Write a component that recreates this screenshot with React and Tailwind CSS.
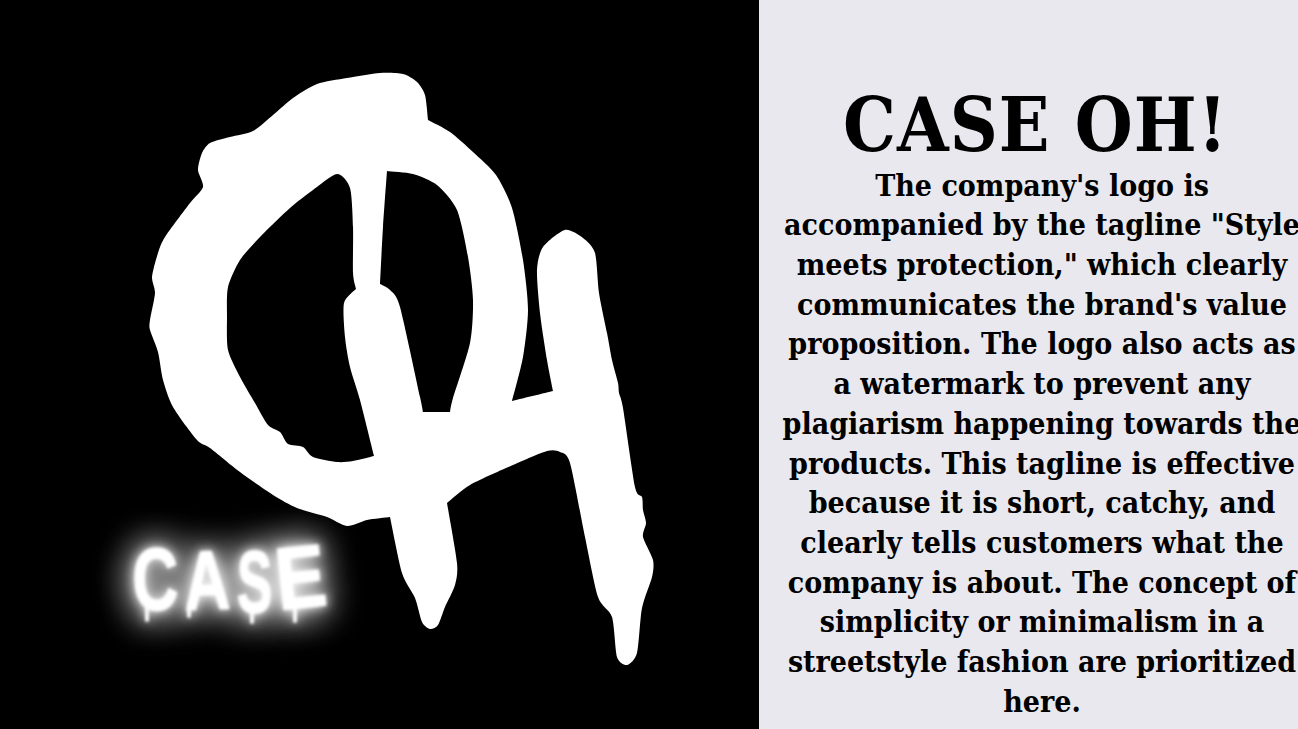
const paragraph = [
  "The company's logo is",
  'accompanied by the tagline "Style',
  'meets protection," which clearly',
  "communicates the brand's value",
  "proposition. The logo also acts as",
  "a watermark to prevent any",
  "plagiarism happening towards the",
  "products. This tagline is effective",
  "because it is short, catchy, and",
  "clearly tells customers what the",
  "company is about. The concept of",
  "simplicity or minimalism in a",
  "streetstyle fashion are prioritized",
  "here.",
];

// contorno do logo, pontos lidos do screenshot (ponto repetido = canto vivo)
const outer = [
  [198, 170], [202, 153], [210, 143], [230, 137], [253, 131], [273, 115], [293, 98], [317, 84], [347, 78],
  [380, 73], [403, 74], [417, 82], [425, 95], [428, 120], [428, 120], [450, 132], [473, 152], [496, 175], [512, 208],
  [523, 260], [528, 310], [523, 357], [512, 401], [512, 401], [553, 391], [553, 391], [547, 360], [540, 313], [537, 270], [543, 247],
  [565, 230], [583, 238], [595, 253], [599, 293], [607, 333], [612, 360], [618, 383], [619, 393], [623, 408],
  [635, 487], [642, 497], [643, 510], [646, 523], [643, 537], [653, 560], [652, 577], [642, 608], [637, 653],
  [627, 665], [617, 657], [612, 617], [598, 597], [585, 537], [570, 463], [560, 452], [547, 451], [513, 465],
  [470, 485], [447, 503], [447, 503], [457, 563], [455, 585], [445, 607], [438, 625], [430, 629], [422, 622], [415, 598],
  [402, 573], [390, 517], [390, 517], [367, 520], [347, 526], [327, 517], [297, 508], [273, 495], [240, 472], [210, 448],
  [197, 440], [173, 407], [163, 380], [158, 352], [150, 330], [150, 320], [155, 293], [152, 277], [158, 253],
  [165, 237], [190, 203], [203, 187],
];
const holeLeft = [
  [337, 174], [350, 188], [353, 227], [353, 273], [356, 289], [356, 289], [344, 303], [345, 337], [350, 367], [360, 400],
  [374, 456], [374, 456], [353, 461], [337, 462], [313, 457], [303, 447], [288, 444], [280, 432], [268, 425], [255, 403],
  [240, 377], [228, 350], [227, 317], [228, 287], [240, 260], [260, 237], [290, 208], [313, 190],
];
const holeRight = [
  [387, 171], [387, 171], [413, 174], [437, 185], [457, 210], [468, 257], [473, 300], [470, 343], [453, 398], [450, 412], [450, 412],
  [423, 412], [423, 412], [420, 397], [400, 307], [390, 290], [380, 284], [380, 284], [383, 227],
];

const caseLetters = [
  { ch: "C", t: "translate(133 610) rotate(-1) scale(.72 1)" },
  { ch: "A", t: "translate(185 610) rotate(-2) scale(.72 .95)" },
  { ch: "S", t: "translate(237 612) scale(.6 1)" },
  { ch: "E", t: "translate(279 610) rotate(-6) scale(.85 1)" },
];

function smooth(pts) {
  const n = pts.length;
  let d = `M${pts[0][0]} ${pts[0][1]}`;
  for (let i = 0; i < n; i++) {
    const a = pts[(i - 1 + n) % n], b = pts[i], c = pts[(i + 1) % n], e = pts[(i + 2) % n];
    if (b[0] === c[0] && b[1] === c[1]) continue;
    const c1 = [b[0] + (c[0] - a[0]) / 8, b[1] + (c[1] - a[1]) / 8];
    const c2 = [c[0] - (e[0] - b[0]) / 8, c[1] - (e[1] - b[1]) / 8];
    d += `C${c1[0]} ${c1[1]} ${c2[0]} ${c2[1]} ${c[0]} ${c[1]}`;
  }
  return d + "Z";
}

function Logo() {
  return (
    <svg viewBox="0 0 759 729" className="block h-full w-full">
      <defs>
        <filter id="glow" x="-40%" y="-60%" width="180%" height="220%">
          <feGaussianBlur in="SourceGraphic" stdDeviation="1.4" result="core" />
          <feGaussianBlur in="SourceGraphic" stdDeviation="6" result="g1" />
          <feGaussianBlur in="SourceGraphic" stdDeviation="18" result="g2" />
          <feMerge>
            <feMergeNode in="g2" />
            <feMergeNode in="g2" />
            <feMergeNode in="g1" />
            <feMergeNode in="core" />
          </feMerge>
        </filter>
      </defs>
      <path fill="#fff" fillRule="evenodd" d={smooth(outer) + smooth(holeLeft) + smooth(holeRight)} />
      <g filter="url(#glow)" fill="#fff" stroke="#fff" strokeLinecap="round">
        {caseLetters.map((l) => (
          <text key={l.ch} transform={l.t} fontFamily="Liberation Sans" fontWeight="700" fontSize="88" strokeWidth="1.5" strokeLinejoin="round">
            {l.ch}
          </text>
        ))}
        <path strokeWidth="4" fill="none" d="M147 606V620M189 604V616M252 608V622M295 602V621" />
      </g>
    </svg>
  );
}

export default function App() {
  return (
    <div className="flex h-[729px] w-[1298px] overflow-hidden">
      <div className="h-full w-[759px] shrink-0 bg-black">
        <Logo />
      </div>
      <div className="w-[566px] shrink-0 bg-[#e9e8ee] pt-[85px] text-center font-['DejaVu_Serif_Condensed','DejaVu_Serif',serif] font-bold text-black">
        <h1 className="pr-[13px] text-[74px] leading-[80px] tracking-[1px]">CASE OH!</h1>
        <p className="pt-[0.6px] text-[30px] leading-[39.7px]">
          {paragraph.map((line) => (
            <span key={line} className="block whitespace-nowrap">{line}</span>
          ))}
        </p>
      </div>
    </div>
  );
}
